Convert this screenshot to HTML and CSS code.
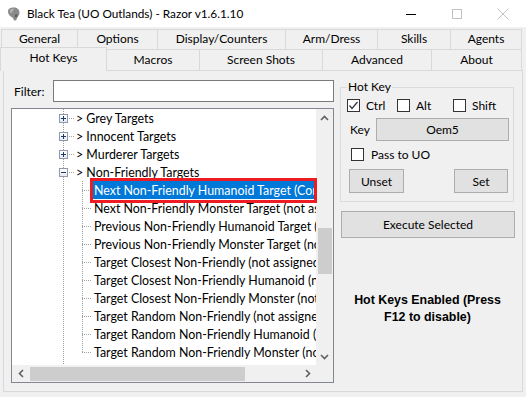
FILE: index.html
```html
<!DOCTYPE html>
<html>
<head>
<meta charset="utf-8">
<title>Razor</title>
<link rel="stylesheet" href="styles.css">
</head>
<body>
<div class="window">
  <div class="titlebar">
    <svg class="app-icon" viewBox="0 0 16 16">
      <path d="M2 5 C2 2.5 5 1 8 1.5 C11 1.5 13.5 3.5 13.5 6.5 C13.5 9.5 11.5 10.5 10.5 13.5 C10 15 7.5 15 7.5 13 C7 11 4.5 11 3.2 9 C2.3 7.8 2 6.5 2 5 Z" fill="#8a8a8a"/>
      <path d="M4 4 C5 3 7 2.6 8.5 3 C7 4 6 5.5 5.5 7.5 C4.5 7 3.6 5.5 4 4 Z" fill="#b4b4b4"/>
      <path d="M10 8 C11.5 8 12 9 11 10.5 C10.5 11.5 9.5 12 9 11 C8.7 10 9 8.5 10 8 Z" fill="#5e5e5e"/>
    </svg>
    <span class="title">Black Tea (UO Outlands) - Razor v1.6.1.10</span>
    <div class="controls">
      <span class="ctl"><svg width="10" height="10" viewBox="0 0 10 10"><path d="M0 5.5 H10" stroke="#000" stroke-width="1"/></svg></span>
      <span class="ctl"><svg width="10" height="10" viewBox="0 0 10 10"><rect x="0.5" y="0.5" width="9" height="9" fill="none" stroke="#c2c2c2" stroke-width="1"/></svg></span>
      <span class="ctl"><svg width="12" height="12" viewBox="0 0 12 12"><path d="M0.5 0.5 L11.5 11.5 M11.5 0.5 L0.5 11.5" stroke="#c2c2c2" stroke-width="1"/></svg></span>
    </div>
  </div>

  <div class="tabstrip">
    <div class="tabrow row1">
      <div class="tab t-general">General</div>
      <div class="tab t-options">Options</div>
      <div class="tab t-display">Display/Counters</div>
      <div class="tab t-arm">Arm/Dress</div>
      <div class="tab t-skills">Skills</div>
      <div class="tab t-agents">Agents</div>
    </div>
    <div class="tabrow row2">
      <div class="tab selected t-hotkeys">Hot Keys</div>
      <div class="tab t-macros">Macros</div>
      <div class="tab t-screens">Screen Shots</div>
      <div class="tab t-advanced">Advanced</div>
      <div class="tab t-about">About</div>
    </div>
  </div>

  <div class="page">
    <div class="leftcol">
      <div class="filter">
        <label class="filter-label">Filter:</label>
        <input class="filter-input" type="text">
      </div>
      <div class="tree">
        <div class="tree-view">
          <div class="rows">
            <div class="node"><span class="ind"></span><span class="cell c-tee"><span class="box plus"></span></span><span class="label">&gt; Grey Targets</span></div>
            <div class="node"><span class="ind"></span><span class="cell c-tee"><span class="box plus"></span></span><span class="label">&gt; Innocent Targets</span></div>
            <div class="node"><span class="ind"></span><span class="cell c-tee"><span class="box plus"></span></span><span class="label">&gt; Murderer Targets</span></div>
            <div class="node"><span class="ind"></span><span class="cell c-tee"><span class="box minus"></span></span><span class="label">&gt; Non-Friendly Targets</span></div>
            <div class="node"><span class="ind"></span><span class="cell c-line"></span><span class="cell2 c-tee2"></span><span class="label selected">Next Non-Friendly Humanoid Target (Control+Oem5)</span></div>
            <div class="node"><span class="ind"></span><span class="cell c-line"></span><span class="cell2 c-tee2"></span><span class="label">Next Non-Friendly Monster Target (not assigned)</span></div>
            <div class="node"><span class="ind"></span><span class="cell c-line"></span><span class="cell2 c-tee2"></span><span class="label">Previous Non-Friendly Humanoid Target (not assigned)</span></div>
            <div class="node"><span class="ind"></span><span class="cell c-line"></span><span class="cell2 c-tee2"></span><span class="label">Previous Non-Friendly Monster Target (not assigned)</span></div>
            <div class="node"><span class="ind"></span><span class="cell c-line"></span><span class="cell2 c-tee2"></span><span class="label">Target Closest Non-Friendly (not assigned)</span></div>
            <div class="node"><span class="ind"></span><span class="cell c-line"></span><span class="cell2 c-tee2"></span><span class="label">Target Closest Non-Friendly Humanoid (not assigned)</span></div>
            <div class="node"><span class="ind"></span><span class="cell c-line"></span><span class="cell2 c-tee2"></span><span class="label">Target Closest Non-Friendly Monster (not assigned)</span></div>
            <div class="node"><span class="ind"></span><span class="cell c-line"></span><span class="cell2 c-tee2"></span><span class="label">Target Random Non-Friendly (not assigned)</span></div>
            <div class="node"><span class="ind"></span><span class="cell c-line"></span><span class="cell2 c-tee2"></span><span class="label">Target Random Non-Friendly Humanoid (not assigned)</span></div>
            <div class="node"><span class="ind"></span><span class="cell c-line"></span><span class="cell2 c-ell"></span><span class="label">Target Random Non-Friendly Monster (not assigned)</span></div>
            <div class="node"><span class="ind"></span><span class="cell c-line"></span></div>
          </div>
          <div class="vscroll">
            <span class="sbtn"><svg width="9" height="6" viewBox="0 0 9 6"><polyline points="1,5 4.5,1.5 8,5" fill="none" stroke="#606060" stroke-width="1.6"/></svg></span>
            <div class="vtrack"><div class="vthumb"></div></div>
            <span class="sbtn"><svg width="9" height="6" viewBox="0 0 9 6"><polyline points="1,1 4.5,4.5 8,1" fill="none" stroke="#606060" stroke-width="1.6"/></svg></span>
          </div>
        </div>
        <div class="hbar">
          <div class="hscroll">
            <span class="sbtn"><svg width="6" height="9" viewBox="0 0 6 9"><polyline points="5,1 1.5,4.5 5,8" fill="none" stroke="#606060" stroke-width="1.6"/></svg></span>
            <div class="htrack"><div class="hthumb"></div></div>
            <span class="sbtn"><svg width="6" height="9" viewBox="0 0 6 9"><polyline points="1,1 4.5,4.5 1,8" fill="none" stroke="#606060" stroke-width="1.6"/></svg></span>
          </div>
          <div class="corner"></div>
        </div>
      </div>
    </div>

    <div class="rightcol">
      <fieldset class="group">
        <legend class="legend">Hot Key</legend>
        <div class="mods">
          <span class="chk-item ci-ctrl"><span class="chk checked"><svg width="11" height="11" viewBox="0 0 11 11"><polyline points="1.5,5.5 4,8.5 9.5,2" fill="none" stroke="#333" stroke-width="1.2"/></svg></span><span class="chk-text">Ctrl</span></span>
          <span class="chk-item ci-alt"><span class="chk"></span><span class="chk-text">Alt</span></span>
          <span class="chk-item ci-shift"><span class="chk"></span><span class="chk-text">Shift</span></span>
        </div>
        <div class="keyrow">
          <span class="key-label">Key</span>
          <span class="keybox">Oem5</span>
        </div>
        <div class="passrow">
          <span class="chk"></span><span class="chk-text pass-text">Pass to UO</span>
        </div>
        <div class="btnrow">
          <button class="btn btn-unset">Unset</button>
          <button class="btn btn-set">Set</button>
        </div>
      </fieldset>
      <button class="btn btn-exec">Execute Selected</button>
      <div class="status">Hot Keys Enabled (Press<br>F12 to disable)</div>
    </div>
  </div>

  <div class="annot"></div>
</div>
</body>
</html>
```

FILE: styles.css
```css
* { box-sizing: border-box; }
html, body { margin: 0; padding: 0; }
body {
  font-family: "Segoe UI", Lato, "Liberation Sans", sans-serif;
  font-size: 12px;
  color: #000;
  background: #f0f0f0;
}
.window {
  width: 526px;
  height: 397px;
  background: #f0f0f0;
  position: relative;
  overflow: hidden;
}

/* title bar */
.titlebar {
  height: 27px;
  background: #fff;
  display: flex;
  align-items: center;
}
.app-icon { width: 16px; height: 16px; margin-left: 6px; margin-right: 5px; flex: none; }
.title { line-height: 16px; font-size: 11.8px; }
.controls { margin-left: auto; display: flex; height: 27px; }
.ctl { width: 46px; display: flex; align-items: center; justify-content: center; }

/* tabs */
.tabstrip { padding-top: 2px; }
.tabrow { display: flex; }
.row1 { height: 20px; padding-left: 1px; }
.row2 { height: 21px; align-items: flex-end; }
.tab {
  height: 100%;
  border: 1px solid #d9d9d9;
  border-bottom: 0;
  margin-right: -1px;
  text-align: center;
  line-height: 18px;
  background: #f0f0f0;
  white-space: nowrap;
  flex: none;
}
.row2 .tab { line-height: 19px; }
.row2 .tab.selected {
  height: 24px;
  margin-bottom: -1px;
  line-height: 19px;
  position: relative;
  z-index: 1;
  background: #f0f0f0;
}
.t-general { width: 77px; }
.t-options { width: 81px; }
.t-display { width: 129px; }
.t-arm { width: 93px; }
.t-skills { width: 74px; }
.t-agents { width: 72px; }
.t-hotkeys { width: 107px; }
.t-macros { width: 94px; }
.t-screens { width: 124px; }
.t-advanced { width: 110px; }
.t-about { width: 91px; }

/* page */
.page {
  margin-left: 3px;
  width: 520px;
  height: 322px;
  border: 1px solid #d9d9d9;
  display: flex;
  padding: 9px 0 0 7px;
  background: #f0f0f0;
}
.leftcol { width: 323px; flex: none; }
.filter { display: flex; align-items: center; height: 22px; }
.filter-label { width: 42px; padding-left: 3px; }
.filter-input {
  width: 281px;
  height: 22px;
  border: 1px solid #7a7a7a;
  margin: 0;
  padding: 0;
  background: #fff;
}

/* tree */
.tree {
  margin-top: 6px;
  width: 323px;
  height: 275px;
  border: 1px solid #828790;
  background: #fff;
  display: flex;
  flex-direction: column;
}
.tree-view { display: flex; height: 256px; }
.rows { width: 304px; overflow: hidden; flex: none; }
.node { display: flex; height: 18px; white-space: nowrap; }
.ind { width: 44px; flex: none; }
.cell { width: 19px; height: 18px; flex: none; display: flex; align-items: center; }
.cell2 { width: 18px; height: 18px; flex: none; }
.label { padding: 0 1px; line-height: 19px; height: 18px; font-size: 12.4px; }
.label.selected { background: #0078d7; color: #fff; }

.c-tee {
  background:
    repeating-linear-gradient(to bottom, #a0a0a0 0 1px, transparent 1px 2px) 7px 0 / 1px 100% no-repeat,
    repeating-linear-gradient(to right, #a0a0a0 0 1px, transparent 1px 2px) 7px 9px / 12px 1px no-repeat;
}
.c-line {
  background: repeating-linear-gradient(to bottom, #a0a0a0 0 1px, transparent 1px 2px) 7px 0 / 1px 100% no-repeat;
}
.c-tee2 {
  background:
    repeating-linear-gradient(to bottom, #a0a0a0 0 1px, transparent 1px 2px) 7px 0 / 1px 100% no-repeat,
    repeating-linear-gradient(to right, #a0a0a0 0 1px, transparent 1px 2px) 7px 9px / 9px 1px no-repeat;
}
.c-ell {
  background:
    repeating-linear-gradient(to bottom, #a0a0a0 0 1px, transparent 1px 2px) 7px 0 / 1px 10px no-repeat,
    repeating-linear-gradient(to right, #a0a0a0 0 1px, transparent 1px 2px) 7px 9px / 9px 1px no-repeat;
}
.box {
  width: 9px;
  height: 9px;
  margin-left: 3px;
  border: 1px solid #8e9aab;
  background-color: #fff;
}
.box.plus {
  background:
    linear-gradient(#1f3a6e, #1f3a6e) center / 5px 1px no-repeat,
    linear-gradient(#1f3a6e, #1f3a6e) center / 1px 5px no-repeat,
    linear-gradient(#ffffff, #e6e9ee);
}
.box.minus {
  background:
    linear-gradient(#1f3a6e, #1f3a6e) center / 5px 1px no-repeat,
    linear-gradient(#ffffff, #e6e9ee);
}

/* scrollbars */
.vscroll { width: 17px; flex: none; background: #f0f0f0; display: flex; flex-direction: column; }
.sbtn { width: 17px; height: 17px; flex: none; display: flex; align-items: center; justify-content: center; }
.vtrack { flex: 1; }
.vthumb { margin: 102px 1px 0 2px; height: 46px; background: #cdcdcd; }
.hbar { display: flex; height: 17px; flex: none; }
.hscroll { width: 304px; display: flex; background: #f0f0f0; }
.htrack { flex: 1; }
.hthumb { margin: 2px 0 1px 1px; width: 215px; height: 14px; background: #cdcdcd; }
.corner { width: 17px; background: #f0f0f0; }

/* right column */
.rightcol { width: 175px; margin-left: 6px; flex: none; }
.group {
  margin: 0;
  padding: 0 0 8px 0;
  width: 174px;
  border: 1px solid #dcdcdc;
}
.legend { padding: 0 1px; margin-left: 6px; line-height: 14px; }
.mods { display: flex; align-items: center; height: 13px; margin-top: 5px; padding-left: 6px; }
.chk-item { display: flex; align-items: center; flex: none; }
.ci-ctrl { width: 50px; }
.ci-alt { width: 56px; }
.chk {
  width: 13px;
  height: 13px;
  border: 1px solid #333;
  background: #fff;
  flex: none;
  display: flex;
  align-items: center;
  justify-content: center;
}
.chk-text { margin-left: 6px; line-height: 13px; }
.keyrow { display: flex; align-items: center; margin-top: 6px; padding-left: 9px; }
.key-label { width: 26px; }
.keybox {
  width: 133px;
  height: 23px;
  border: 1px solid #adadad;
  background: #e1e1e1;
  text-align: center;
  line-height: 21px;
}
.passrow { display: flex; align-items: center; margin-top: 7px; padding-left: 10px; }
.pass-text { margin-left: 7px; }
.btnrow { display: flex; margin-top: 8px; padding-left: 8px; }
.btn {
  border: 1px solid #adadad;
  background: #e1e1e1;
  font: inherit;
  color: #000;
  padding: 0;
  margin: 0;
}
.btn-unset { width: 55px; height: 24px; }
.btn-set { width: 54px; height: 24px; margin-left: 50px; }
.btn-exec { display: block; width: 174px; height: 27px; margin: 9px 0 0 1px; }
.status {
  margin-top: 54px;
  text-align: center;
  font-family: "Liberation Sans", Arial, sans-serif;
  font-size: 12.4px;
  font-weight: bold;
  line-height: 17px;
}

/* red annotation rectangle drawn over the selected item */
.annot {
  position: absolute;
  left: 90px;
  top: 178px;
  width: 227px;
  height: 25px;
  border: 3px solid #ed1c24;
}
```
